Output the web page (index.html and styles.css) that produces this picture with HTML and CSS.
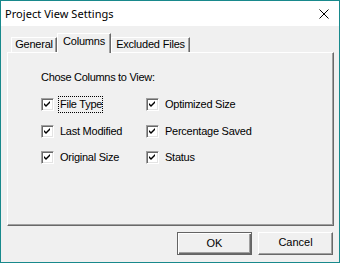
FILE: index.html
```html
<!DOCTYPE html>
<html>
<head>
<meta charset="utf-8">
<link rel="stylesheet" href="styles.css">
</head>
<body>
<div class="window">
  <div class="titlebar">
    <span class="title">Project View Settings</span>
    <svg class="close" width="10" height="10" viewBox="0 0 10 10"><path d="M0.5 0.5 L9.5 9.5 M9.5 0.5 L0.5 9.5" stroke="#000" stroke-width="1" fill="none"/></svg>
  </div>
  <div class="client">
    <div class="tabs">
      <div class="tab tab-general">General</div>
      <div class="tab tab-active">Columns</div>
      <div class="tab tab-excluded">Excluded Files</div>
    </div>
    <div class="panel">
      <div class="heading">Chose Columns to View:</div>
      <div class="grid">
        <div class="opt"><span class="cb"><svg width="11" height="11" viewBox="0 0 11 11"><path d="M2 4 L4 6 L8 2 L8 4 L4 8 L2 6 Z" fill="#000"/></svg></span><span class="lbl focus">File Type</span></div>
        <div class="opt"><span class="cb"><svg width="11" height="11" viewBox="0 0 11 11"><path d="M2 4 L4 6 L8 2 L8 4 L4 8 L2 6 Z" fill="#000"/></svg></span><span class="lbl">Optimized Size</span></div>
        <div class="opt"><span class="cb"><svg width="11" height="11" viewBox="0 0 11 11"><path d="M2 4 L4 6 L8 2 L8 4 L4 8 L2 6 Z" fill="#000"/></svg></span><span class="lbl">Last Modified</span></div>
        <div class="opt"><span class="cb"><svg width="11" height="11" viewBox="0 0 11 11"><path d="M2 4 L4 6 L8 2 L8 4 L4 8 L2 6 Z" fill="#000"/></svg></span><span class="lbl">Percentage Saved</span></div>
        <div class="opt"><span class="cb"><svg width="11" height="11" viewBox="0 0 11 11"><path d="M2 4 L4 6 L8 2 L8 4 L4 8 L2 6 Z" fill="#000"/></svg></span><span class="lbl">Original Size</span></div>
        <div class="opt"><span class="cb"><svg width="11" height="11" viewBox="0 0 11 11"><path d="M2 4 L4 6 L8 2 L8 4 L4 8 L2 6 Z" fill="#000"/></svg></span><span class="lbl">Status</span></div>
      </div>
    </div>
    <div class="buttons">
      <div class="btn btn-default">OK</div>
      <div class="btn">Cancel</div>
    </div>
  </div>
</div>
</body>
</html>
```

FILE: styles.css
```css
* { box-sizing: border-box; }
html, body { margin: 0; padding: 0; }
body {
  width: 340px;
  height: 263px;
  font-family: "Liberation Sans", Arial, sans-serif;
  font-size: 11px;
  color: #000;
  background: #f0f0f0;
}
.window {
  width: 340px;
  height: 263px;
  border: 1px solid #18898c;
  display: flex;
  flex-direction: column;
  background: #f0f0f0;
}
.titlebar {
  height: 25px;
  background: #fff;
  display: flex;
  align-items: center;
  justify-content: space-between;
  padding: 0 10px 0 4px;
}
.title {
  font-family: "Noto Sans", "Open Sans", sans-serif;
  font-size: 11px;
  letter-spacing: 0.05px;
  line-height: 16px;
}
.close { display: block; }
.client {
  flex: 1;
  display: flex;
  flex-direction: column;
  padding: 7px 5px 0 6px;
}
.tabs {
  height: 19px;
  display: flex;
  align-items: flex-end;
  padding-left: 4px;
  letter-spacing: -0.2px;
}
.tab {
  height: 15px;
  line-height: 13px;
  text-align: center;
  background: #f0f0f0;
  border-top: 1px solid #fff;
  border-left: 1px solid #fff;
  border-right: 1px solid #696969;
  box-shadow: inset -1px 0 0 #a0a0a0;
}
.tab-general { width: 46px; }
.tab-excluded { width: 79px; }
.tab-active {
  width: 54px;
  height: 20px;
  margin-bottom: -1px;
  position: relative;
  z-index: 1;
  padding-top: 1px;
}
.panel {
  height: 174px;
  border-top: 1px solid #fff;
  border-left: 1px solid #fff;
  border-right: 1px solid #696969;
  border-bottom: 1px solid #696969;
  box-shadow: inset -1px -1px 0 #a0a0a0;
  padding: 18px 0 0 33px;
}
.heading {
  line-height: 13px;
  height: 13px;
  letter-spacing: -0.3px;
}
.grid {
  margin-top: 12px;
  display: grid;
  grid-template-columns: 105px 140px;
  grid-auto-rows: 17px;
  row-gap: 9.5px;
}
.opt {
  display: flex;
  align-items: center;
}
.cb {
  width: 13px;
  height: 13px;
  background: #fff;
  border-top: 1px solid #a0a0a0;
  border-left: 1px solid #a0a0a0;
  border-right: 1px solid #fff;
  border-bottom: 1px solid #fff;
  box-shadow: inset 1px 1px 0 #696969, inset -1px -1px 0 #e3e3e3;
  display: flex;
  align-items: center;
  justify-content: center;
}
.cb svg { display: block; }
.lbl {
  margin-left: 4px;
  padding: 1px 0 1px 1px;
  border: 1px solid transparent;
  line-height: 13px;
  white-space: nowrap;
  letter-spacing: -0.25px;
}
.lbl.focus { border: 1px dotted #000; }
.buttons {
  margin-top: 6px;
  display: flex;
  justify-content: flex-end;
  gap: 6px;
  padding-right: 1px;
}
.btn {
  width: 75px;
  height: 23px;
  line-height: 19px;
  text-align: center;
  background: #f0f0f0;
  border-top: 1px solid #fff;
  border-left: 1px solid #fff;
  border-right: 1px solid #696969;
  border-bottom: 1px solid #696969;
  box-shadow: inset -1px -1px 0 #a0a0a0;
}
.btn-default {
  border: 1px solid #646464;
  box-shadow: inset 1px 1px 0 #fff, inset -1px -1px 0 #696969, inset -2px -2px 0 #a0a0a0;
  line-height: 21px;
}
```
